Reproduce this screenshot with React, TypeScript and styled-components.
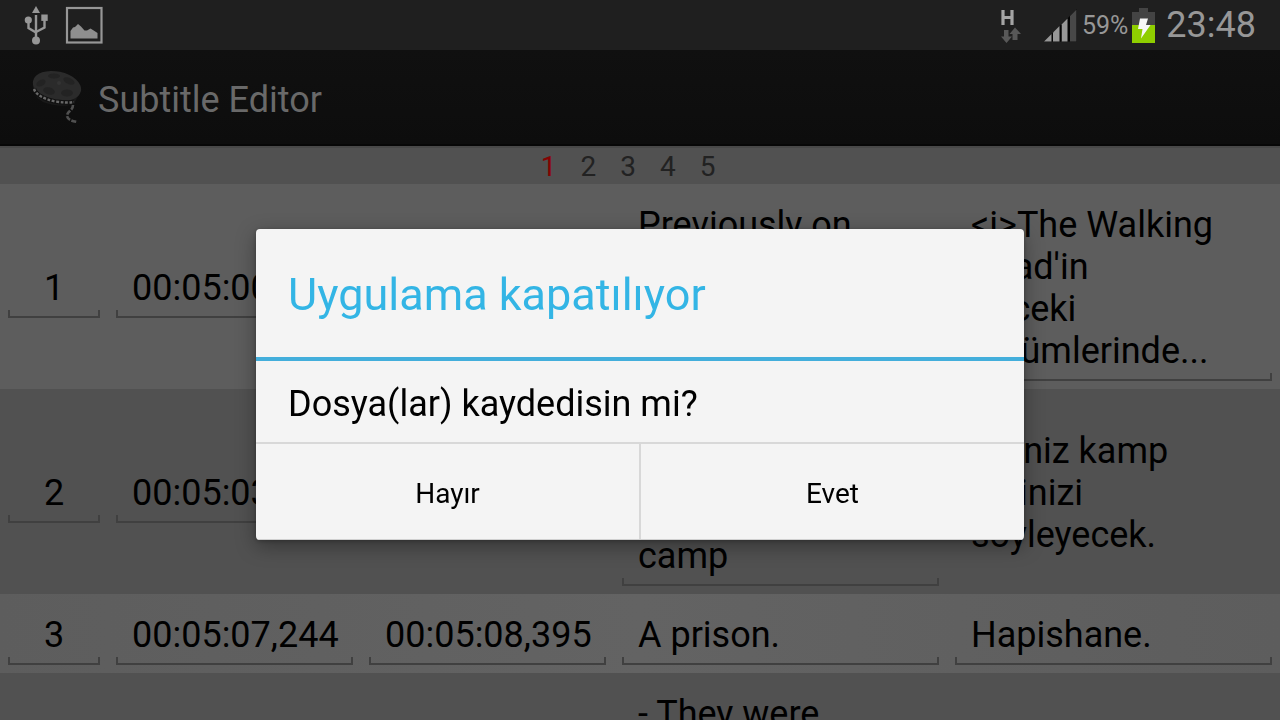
import React from "react";
import styled, { createGlobalStyle } from "styled-components";

const GlobalStyle = createGlobalStyle`
  *, *::before, *::after { box-sizing: border-box; }
  html, body { margin: 0; }
  body {
    font-family: Roboto, "Noto Sans", sans-serif;
    background: #515151;
    color: #000;
  }
  button, input, textarea { font: inherit; color: inherit; }
`;

const Screen = styled.div`
  display: flex;
  flex-direction: column;
  height: 100vh;
  overflow: hidden;
`;

const StatusBar = styled.header`
  display: flex;
  flex: none;
  align-items: center;
  justify-content: space-between;
  height: 50px;
  padding: 0 24px;
  background: #1f1f1f;
  color: #979797;
`;

const StatusGroup = styled.div<{ $gap: number }>`
  display: flex;
  align-items: center;
  gap: ${(p) => p.$gap}px;
`;

const Percent = styled.span`
  padding: 2px 0 0 1px;
  font-size: 25px;
  line-height: 30px;
`;

const Clock = styled.time`
  padding-left: 7px;
  font-size: 36px;
  line-height: 42px;
`;

const ActionBar = styled.div`
  display: flex;
  flex: none;
  align-items: center;
  gap: 16px;
  height: 96px;
  padding: 2px 32px 0;
  background: linear-gradient(#101010, #0d0d0d);
  border-bottom: 2px solid #070707;
`;

const AppTitle = styled.h1`
  margin: 0;
  padding-top: 4px;
  font-size: 36px;
  font-weight: 400;
  line-height: 42px;
  color: #696969;
`;

const Pager = styled.nav`
  display: flex;
  flex: none;
  justify-content: center;
  gap: 24px;
  height: 38px;
  padding: 3px 24px 0 0;
  background: #515151;
  border-top: 2px solid #484848;
`;

const PageLink = styled.a<{ $current: boolean }>`
  font-size: 28px;
  line-height: 32px;
  text-decoration: none;
  color: ${(p) => (p.$current ? "#850303" : "#222")};
`;

const SubtitleTable = styled.table`
  width: 100%;
  border-collapse: collapse;
  table-layout: fixed;
`;

const Column = styled.col<{ $share: number }>`
  width: ${(p) => p.$share}%;
`;

const SubtitleRow = styled.tr<{ $tone: string }>`
  background: ${(p) => p.$tone};
`;

const Cell = styled.td`
  padding: 8px;
  vertical-align: middle;
`;

const fieldStyle = `
  display: block;
  width: 100%;
  margin: 0;
  padding: 12px 16px 9px;
  border: 0;
  border-radius: 0;
  outline: 0;
  font-size: 36px;
  line-height: 42px;
`;

const bracket = `
  background:
    linear-gradient(#404040, #404040) bottom / 100% 2px no-repeat,
    linear-gradient(#404040, #404040) left bottom / 2px 8px no-repeat,
    linear-gradient(#404040, #404040) right bottom / 2px 8px no-repeat;
`;

const LineField = styled.input<{ $centered?: boolean }>`
  ${fieldStyle}
  ${bracket}
  height: 63px;
  padding-right: ${(p) => (p.$centered ? 16 : 8)}px;
  text-align: ${(p) => (p.$centered ? "center" : "left")};
`;

const TextField = styled.textarea<{ $plain?: boolean }>`
  ${fieldStyle}
  ${(p) => (p.$plain ? "background: none;" : bracket)}
  resize: none;
  overflow: hidden;
`;

const DialogLayer = styled.div`
  position: fixed;
  inset: 49px 0 0;
  display: flex;
  align-items: center;
  justify-content: center;
`;

const Dialog = styled.section`
  width: 60%;
  overflow: hidden;
  border-radius: 4px;
  background: #f4f4f4;
  box-shadow: 0 6px 20px rgba(0, 0, 0, 0.35), 0 1px 4px rgba(0, 0, 0, 0.25);
`;

const DialogTitle = styled.h2`
  margin: 0;
  padding: 40px 32px 36px;
  border-bottom: 4px solid #43aedb;
  font-size: 45px;
  font-weight: 400;
  line-height: 52px;
  color: #33b5e5;
`;

const DialogMessage = styled.p`
  margin: 0;
  padding: 22px 32px 17px;
  font-size: 36px;
  line-height: 42px;
`;

const DialogActions = styled.div`
  display: flex;
  border-top: 2px solid #d8d8d8;
  border-bottom: 1px solid #d0d0d0;
`;

const DialogButton = styled.button`
  flex: 1;
  height: 95px;
  padding: 5px 0 0;
  border: 0;
  background: none;
  font-size: 28px;
  line-height: 32px;

  & + & {
    border-left: 2px solid #d8d8d8;
  }
`;

const UsbIcon = () => (
  <svg width="24" height="40" viewBox="0 0 24 40" aria-hidden="true">
    <g fill="none" stroke="#979797" strokeWidth="2.4">
      <path d="M12 10V34" />
      <path d="M4.500 16V23L12 27.500" />
      <path d="M20.500 14V22.500L12 27" />
    </g>
    <g fill="#979797">
      <path d="M12 1L16 8H8Z" />
      <circle cx="4.300" cy="15" r="3.600" />
      <rect x="17.300" y="9.500" width="6.400" height="6.400" />
      <circle cx="12" cy="35.500" r="4" />
    </g>
  </svg>
);

const PictureIcon = () => (
  <svg width="38" height="38" viewBox="0 0 38 38" aria-hidden="true">
    <rect x="2" y="2" width="34.500" height="34.500" fill="none" stroke="#979797" strokeWidth="2.200" />
    <path
      d="M5.500 32.500V25L8 21.500L10 21L13 18L16 20.500L19.500 24.500L22 24.500L25.500 22.500L29.500 25L32.500 27V32.500Z"
      fill="#8f8f8f"
    />
  </svg>
);

const NetworkIcon = () => (
  <svg width="24" height="38" viewBox="0 0 24 38" aria-hidden="true">
    <path d="M3 4V19M12 4V19M3 11.500H12" fill="none" stroke="#a4a4a4" strokeWidth="3.200" />
    <g fill="#585858">
      <path d="M4 24H8.500V30.500H12L6.500 37L1 30.500H4Z" />
      <path d="M12.500 34V28H9.500L15 21.500L21 28H17.500V34Z" />
    </g>
  </svg>
);

const SignalIcon = () => (
  <svg width="33" height="33" viewBox="0 0 33 33" aria-hidden="true">
    <path d="M0 32.500L33 0V32.500Z" fill="#050505" />
    <g fill="#979797">
      <path d="M0 32.500L7.500 25V32.500Z" />
      <path d="M9 32.500V23.500L15.500 17V32.500Z" />
      <path d="M17.500 32.500V15.500L23.500 9.500V32.500Z" />
    </g>
    <path d="M17 32.500V15.500" stroke="#050505" />
    <path d="M26 32.500V7L32.500 0.500V32.500Z" fill="#484848" />
  </svg>
);

const BatteryIcon = () => (
  <svg width="23" height="35" viewBox="0 0 23 35" aria-hidden="true">
    <path d="M7 0H16V4H23V18H0V4H7Z" fill="#444" />
    <path d="M0 17H23V35H0Z" fill="#8fce00" />
    <path d="M8 10.500H16L14 17H18.500L9 30.500L10.500 21H6Z" fill="#f6f6f6" />
  </svg>
);

const ReelIcon = () => (
  <svg width="50" height="56" viewBox="0 0 50 56" aria-hidden="true">
    <path d="M1 12C0 22 3 27 11 32C21 36 34 37 42 34L49 20Z" fill="#191919" />
    <ellipse cx="25" cy="16" rx="24.500" ry="14.500" transform="rotate(12 25 16)" fill="#2b2b2b" />
    <g fill="#232323">
      <ellipse cx="22" cy="6" rx="6" ry="2.500" />
      <ellipse cx="9" cy="13" rx="5" ry="3" transform="rotate(-30 9 13)" />
      <ellipse cx="37" cy="11" rx="6" ry="3" transform="rotate(25 37 11)" />
      <ellipse cx="17" cy="21" rx="6" ry="3.500" transform="rotate(15 17 21)" />
      <ellipse cx="35" cy="23" rx="6" ry="3.500" />
    </g>
    <circle cx="27" cy="13" r="2" fill="#343434" />
    <path d="M2 19C4 25 12 29 23 31.500C31 32.500 37 33 42 32" fill="none" stroke="#111" strokeWidth="4.500" />
    <path
      d="M2 19C4 25 12 29 23 31.500C31 32.500 37 33 42 32"
      fill="none"
      stroke="#686868"
      strokeWidth="2.400"
      strokeDasharray="2.800 1.600"
    />
    <path
      d="M41 35C41 41 35 41 35 46C36 50 40 51 45 52"
      fill="none"
      stroke="#505050"
      strokeWidth="2.600"
      strokeDasharray="5 1.500"
    />
  </svg>
);

interface Subtitle {
  start: string;
  end: string;
  original: string;
  translation: string;
  tone: string;
  plainTranslation?: boolean;
}

const subtitles: Subtitle[] = [
  {
    start: "00:05:00,123",
    end: "00:05:03,040",
    original: "Previously on\nAMC's\nThe Walking\nDead...",
    translation: "<i>The Walking\nDead'in\nönceki\nbölümlerinde...",
    tone: "#5d5d5d",
  },
  {
    start: "00:05:03,210",
    end: "00:05:07,070",
    original: "Your friend\nwill tell us\nwhere your\ncamp",
    translation: "Biriniz kamp\nyerinizi\nsöyleyecek.",
    tone: "#515151",
    plainTranslation: true,
  },
  {
    start: "00:05:07,244",
    end: "00:05:08,395",
    original: "A prison.",
    translation: "Hapishane.",
    tone: "linear-gradient(90deg, #5d5d5d, #636363 50%, #5d5d5d)",
  },
  {
    start: "00:05:08,560",
    end: "00:05:12,300",
    original: "- They were\nthere.\n- All of\nthem.",
    translation: "- Oradaydılar.\n- Hepsi.",
    tone: "#515151",
  },
];

const columnShares = [8.4375, 19.765625, 19.765625, 26.015625, 26.015625];
const pages = [1, 2, 3, 4, 5];

const lineCount = (text: string) => text.split("\n").length;

export default function App() {
  return (
    <>
      <GlobalStyle />
      <Screen>
        <StatusBar>
          <StatusGroup $gap={17}>
            <UsbIcon />
            <PictureIcon />
          </StatusGroup>
          <StatusGroup $gap={4}>
            <StatusGroup $gap={20}>
              <NetworkIcon />
              <SignalIcon />
            </StatusGroup>
            <Percent>59%</Percent>
            <BatteryIcon />
            <Clock>23:48</Clock>
          </StatusGroup>
        </StatusBar>
        <ActionBar>
          <ReelIcon />
          <AppTitle>Subtitle Editor</AppTitle>
        </ActionBar>
        <Pager aria-label="Pages">
          {pages.map((page) => (
            <PageLink key={page} href={`#${page}`} $current={page === 1}>
              {page}
            </PageLink>
          ))}
        </Pager>
        <main>
          <SubtitleTable>
            <colgroup>
              {columnShares.map((share, i) => (
                <Column key={i} $share={share} />
              ))}
            </colgroup>
            <tbody>
              {subtitles.map((s, i) => (
                <SubtitleRow key={i} $tone={s.tone}>
                  <Cell>
                    <LineField $centered aria-label="Number" defaultValue={i + 1} />
                  </Cell>
                  <Cell>
                    <LineField aria-label="Start" defaultValue={s.start} />
                  </Cell>
                  <Cell>
                    <LineField aria-label="End" defaultValue={s.end} />
                  </Cell>
                  <Cell>
                    <TextField
                      aria-label="Original"
                      rows={lineCount(s.original)}
                      defaultValue={s.original}
                      spellCheck={false}
                    />
                  </Cell>
                  <Cell>
                    <TextField
                      $plain={s.plainTranslation}
                      aria-label="Translation"
                      rows={lineCount(s.translation)}
                      defaultValue={s.translation}
                      spellCheck={false}
                    />
                  </Cell>
                </SubtitleRow>
              ))}
            </tbody>
          </SubtitleTable>
        </main>
      </Screen>
      <DialogLayer>
        <Dialog role="alertdialog" aria-labelledby="dialog-title" aria-describedby="dialog-message">
          <DialogTitle id="dialog-title">Uygulama kapatılıyor</DialogTitle>
          <DialogMessage id="dialog-message">Dosya(lar) kaydedisin mi?</DialogMessage>
          <DialogActions>
            <DialogButton type="button">Hayır</DialogButton>
            <DialogButton type="button">Evet</DialogButton>
          </DialogActions>
        </Dialog>
      </DialogLayer>
    </>
  );
}
